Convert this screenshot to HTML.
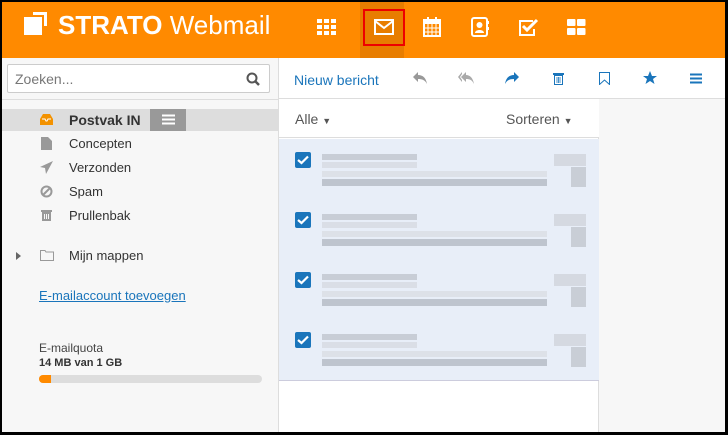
<!DOCTYPE html>
<html><head><style>
*{margin:0;padding:0;box-sizing:border-box}
body{width:728px;height:435px;background:#000;font-family:"Liberation Sans",sans-serif;position:relative;overflow:hidden}
.a{position:absolute}
#page{left:2px;top:2px;width:723px;height:430px;background:#f7f7f7;overflow:hidden}
#hdr{left:0;top:0;width:723px;height:56px;background:#ff8a00}
.ic{position:absolute;top:14px}
.sb{left:0;top:56px;width:277px;height:374px;background:#f7f7f7;border-right:1px solid #ddd}
.ml{left:277px;top:56px;width:320px;height:374px;background:#fff;border-right:1px solid #ddd}
.nav{font-size:13px;color:#333;position:absolute;left:67px}
.blur{position:absolute;background:#ccd2dc;height:7px}
</style></head><body>
<div id="page" class="a">
<div id="hdr" class="a">
  <div class="a" style="left:22px;top:15px;width:18px;height:18px;background:#fff"></div>
  <div class="a" style="left:31px;top:10px;width:14px;height:14px;border-top:3px solid #fff;border-right:3px solid #fff"></div>
  <div class="a" style="left:56px;top:8px;color:#fff;font-size:26px;font-weight:bold;letter-spacing:0px">STRATO <span style="font-weight:normal">Webmail</span></div>
  <svg class="ic" style="left:315px;top:17px" width="20" height="16"><g fill="#fff"><rect x="0" y="0" width="5" height="4"/><rect x="7" y="0" width="5" height="4"/><rect x="14" y="0" width="5" height="4"/><rect x="0" y="6" width="5" height="4"/><rect x="7" y="6" width="5" height="4"/><rect x="14" y="6" width="5" height="4"/><rect x="0" y="12" width="5" height="4"/><rect x="7" y="12" width="5" height="4"/><rect x="14" y="12" width="5" height="4"/></g></svg>
  <div class="a" style="left:358px;top:0;width:44px;height:56px;background:#e87d00"></div>
  <div class="a" style="left:361px;top:7px;width:42px;height:37px;border:2px solid #e00"></div>
  <svg class="ic" style="left:372px;top:17px" width="20" height="16"><rect x="1" y="1" width="18" height="14" fill="none" stroke="#fff" stroke-width="2"/><path d="M1 2 L10 9 L19 2" fill="none" stroke="#fff" stroke-width="2"/></svg>
  <svg class="ic" style="left:421px;top:15px" width="18" height="20"><rect x="1" y="3" width="16" height="16" fill="none" stroke="#fff" stroke-width="2"/><rect x="1" y="3" width="16" height="4" fill="#fff"/><rect x="4" y="0" width="2" height="4" fill="#fff"/><rect x="12" y="0" width="2" height="4" fill="#fff"/><path d="M1 11H17M1 15H17M5 7V19M9 7V19M13 7V19" stroke="#fff" stroke-width="1"/></svg>
  <svg class="ic" style="left:469px;top:15px" width="18" height="20"><rect x="1" y="1" width="15" height="18" rx="2" fill="none" stroke="#fff" stroke-width="2"/><circle cx="8.5" cy="8" r="3" fill="#fff"/><path d="M4 16c0-4 9-4 9 0z" fill="#fff"/><rect x="16" y="4" width="2" height="3" fill="#fff"/><rect x="16" y="10" width="2" height="3" fill="#fff"/></svg>
  <svg class="ic" style="left:517px;top:16px" width="20" height="18"><path d="M14 3H1V17H15V11" fill="none" stroke="#fff" stroke-width="2"/><path d="M4 8L8 12L18 2" fill="none" stroke="#fff" stroke-width="3"/></svg>
  <svg class="ic" style="left:565px;top:17px" width="20" height="16"><g fill="#fff"><rect x="0" y="0" width="8.5" height="7" rx="1"/><rect x="10" y="0" width="8.5" height="7" rx="1"/><rect x="0" y="9" width="8.5" height="7" rx="1"/><rect x="10" y="9" width="8.5" height="7" rx="1"/></g></svg>
</div>
<div class="a sb">
  <div class="a" style="left:5px;top:6px;width:263px;height:29px;background:#fff;border:1px solid #ccc;border-radius:2px"></div>
  <div class="a" style="left:13px;top:13px;font-size:14px;color:#777">Zoeken...</div>
  <svg class="a" style="left:244px;top:14px" width="14" height="14"><circle cx="6" cy="6" r="4.5" fill="none" stroke="#555" stroke-width="2"/><path d="M9 9L13 13" stroke="#555" stroke-width="2.5"/></svg>
  <div class="a" style="left:0;top:41px;width:277px;height:1px;background:#ddd"></div>
  <div class="a" style="left:0;top:51px;width:277px;height:22px;background:#ddd"></div>
  <div class="a" style="left:148px;top:51px;width:36px;height:22px;background:#999"></div>
  <svg class="a" style="left:160px;top:56px" width="13" height="11"><path d="M0 1.5H13M0 5.5H13M0 9.5H13" stroke="#fff" stroke-width="2"/></svg>
  <svg class="a" style="left:38px;top:56px" width="13" height="11"><path d="M0 5L3 0H10L13 5V11H0Z" fill="#f39200"/><path d="M2 5H5L6 7H7L8 5H11" stroke="#fff" fill="none"/></svg>
  <div class="nav" style="top:54px;font-weight:bold;font-size:14px;color:#333">Postvak IN</div>
  <svg class="a" style="left:39px;top:79px" width="11" height="13"><path d="M0 0H7L11 4V13H0Z" fill="#999"/></svg>
  <div class="nav" style="top:78px">Concepten</div>
  <svg class="a" style="left:38px;top:103px" width="13" height="13"><path d="M13 0L0 6L5 7L6 13Z" fill="#999"/></svg>
  <div class="nav" style="top:102px">Verzonden</div>
  <svg class="a" style="left:38px;top:127px" width="13" height="13"><circle cx="6.5" cy="6.5" r="5" fill="none" stroke="#999" stroke-width="2"/><path d="M3 10L10 3" stroke="#999" stroke-width="2"/></svg>
  <div class="nav" style="top:126px">Spam</div>
  <svg class="a" style="left:39px;top:151px" width="11" height="12"><path d="M0 1H11V3H0ZM1 3H10V12H1Z" fill="#999"/><path d="M3.5 5V10M5.5 5V10M7.5 5V10" stroke="#f7f7f7"/></svg>
  <div class="nav" style="top:150px">Prullenbak</div>
  <svg class="a" style="left:14px;top:194px" width="5" height="8"><path d="M0 0L5 4L0 8Z" fill="#666"/></svg>
  <svg class="a" style="left:38px;top:192px" width="14" height="11"><path d="M0.5 0.5H5L6 2H13.5V10.5H0.5Z" fill="none" stroke="#999"/></svg>
  <div class="nav" style="top:190px">Mijn mappen</div>
  <div class="a" style="left:37px;top:230px;font-size:13px;color:#1a75bb;text-decoration:underline">E-mailaccount toevoegen</div>
  <div class="a" style="left:37px;top:283px;font-size:12px;color:#444">E-mailquota</div>
  <div class="a" style="left:37px;top:299px;font-size:11px;font-weight:bold;color:#333">14 MB van 1 GB</div>
  <div class="a" style="left:37px;top:317px;width:223px;height:8px;background:#ddd;border-radius:4px"></div>
  <div class="a" style="left:37px;top:317px;width:12px;height:8px;background:#ff8a00;border-radius:4px 0 0 4px"></div>
</div>
<div class="a" style="left:277px;top:56px;width:446px;height:41px;background:#fff;border-bottom:1px solid #ddd"></div>
<div class="a" style="left:292px;top:70px;font-size:14px;color:#1a75bb">Nieuw bericht</div>
<svg class="a" style="left:411px;top:70px" width="14" height="12"><path d="M5 0L0 5L5 10V7C9 7 12 8 14 12C13 6 10 3 5 3Z" fill="#999"/></svg>
<svg class="a" style="left:456px;top:70px" width="16" height="12"><path d="M4 0L0 5L4 10V8L2 5L4 2ZM8 0L3 5L8 10V7C12 7 14 8 16 12C15 6 12 3 8 3Z" fill="#aaa"/></svg>
<svg class="a" style="left:503px;top:70px" width="14" height="12"><path d="M9 0L14 5L9 10V7C5 7 2 8 0 12C1 6 4 3 9 3Z" fill="#1a75bb"/></svg>
<svg class="a" style="left:551px;top:70px" width="11" height="13"><path d="M0 1H11V3H0Z" fill="#1a75bb"/><rect x="1.5" y="3.5" width="8" height="9" fill="none" stroke="#1a75bb"/><path d="M4 5V11M5.5 5V11M7 5V11" stroke="#1a75bb" stroke-width="0.8"/></svg>
<svg class="a" style="left:597px;top:70px" width="11" height="13"><path d="M0.5 0.5H10.5V12.5L5.5 8L0.5 12.5Z" fill="none" stroke="#1a75bb"/></svg>
<svg class="a" style="left:641px;top:69px" width="14" height="14"><path d="M7 0L9 5H14L10 8L11.5 13L7 10L2.5 13L4 8L0 5H5Z" fill="#1a75bb"/></svg>
<svg class="a" style="left:688px;top:71px" width="12" height="11"><path d="M0 1.5H12M0 5.5H12M0 9.5H12" stroke="#1a75bb" stroke-width="2"/></svg>
<div class="a ml" style="top:97px;height:333px"></div>
<div class="a" style="left:277px;top:97px;width:320px;height:39px;background:#fff;border-bottom:1px solid #ddd"></div>
<div class="a" style="left:293px;top:109px;font-size:14px;color:#555">Alle <span style="font-size:9px">▼</span></div>
<div class="a" style="left:504px;top:109px;font-size:14px;color:#555">Sorteren <span style="font-size:9px">▼</span></div>
<div class="a" style="left:277px;top:137px;width:320px;height:242px;background:#e8eef8;border-bottom:1px solid #ccd"></div>
<div id="rows"></div>
</div>
<script>
var h='';[150,210,270,330].forEach(function(y){
h+='<div class="a" style="left:293px;top:'+(y)+'px;width:16px;height:16px;background:#1a75bb;border-radius:2px"></div>';
h+='<svg class="a" style="left:295px;top:'+(y+3)+'px" width="12" height="10"><path d="M1 5L4.5 8L11 1.5" fill="none" stroke="#fff" stroke-width="2.2"/></svg>';
h+='<div class="blur" style="left:320px;top:'+(y+2)+'px;width:95px;height:6px;background:#c8cdd6"></div>';
h+='<div class="blur" style="left:320px;top:'+(y+10)+'px;width:95px;height:6px;background:#dadee6"></div>';
h+='<div class="blur" style="left:320px;top:'+(y+19)+'px;width:225px;height:6px;background:#dde1e8"></div>';
h+='<div class="blur" style="left:320px;top:'+(y+27)+'px;width:225px;height:7px;background:#bec4ce"></div>';
h+='<div class="blur" style="left:552px;top:'+(y+2)+'px;width:32px;height:12px;background:#d5d9e1"></div>';
h+='<div class="blur" style="left:569px;top:'+(y+15)+'px;width:15px;height:20px;background:#c9ced6"></div>';
});
document.getElementById('rows').outerHTML=h;
</script>
</body></html>
